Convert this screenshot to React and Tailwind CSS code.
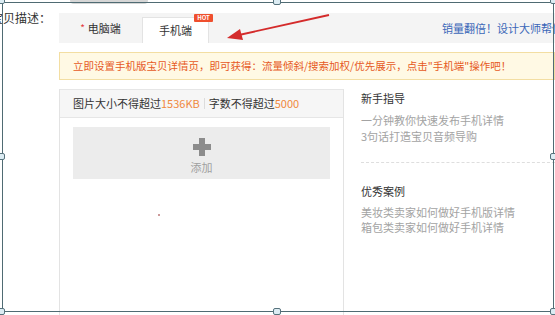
export default function App() {
  const handle = "absolute h-[7px] w-[8px] rounded-[2px] border border-[#56727c] bg-[#dcecf3]";

  return (
    <div className="relative h-[315px] w-[555px] overflow-hidden bg-white font-['Noto_Sans_CJK_SC',sans-serif] text-[11px] leading-none text-[#333]">
      <div className="flex">
        {/* label column */}
        <div className="w-[59px] shrink-0">
          <div className="ml-[-9px] mt-[12px] whitespace-nowrap text-[12px] leading-[12px] text-[#333]">宝贝描述：</div>
        </div>

        {/* main column */}
        <div className="flex min-w-0 flex-1 flex-col">
          <div className="ml-[11px] mt-[-4px] h-[8px] w-[78px] rounded-[4px] bg-[#d6d6d6]" />

          {/* tabs */}
          <div className="mt-[9px] flex h-[30px] items-end overflow-hidden bg-[#f4f4f4]">
            <div className="flex h-[30px] w-[83px] shrink-0 items-center justify-center gap-[3px]">
              <span className="text-[10px] text-[#e4393c]">*</span>
              <span>电脑端</span>
            </div>
            <div className="relative flex h-[26px] w-[67px] shrink-0 items-center justify-center border-x border-t border-[#e3e3e3] bg-white pb-[1px]">
              <span>手机端</span>
              <div className="absolute right-[-5px] top-[-4px] flex h-[8px] w-[19px] items-center justify-center rounded-[1px] bg-[#ef4f2e] text-[6px] font-bold leading-none text-white">
                HOT
              </div>
            </div>
            <div className="ml-[233px] flex h-[30px] shrink-0 items-center whitespace-nowrap text-[#3b67b8]">
              销量翻倍！设计大师帮你
            </div>
          </div>

          {/* notice */}
          <div className="mt-[9px] flex h-[28px] items-center overflow-hidden whitespace-nowrap border border-[#f3dea2] bg-[#fff9e4] pl-[13px] text-[10.5px] text-[#e65a1e]">
            立即设置手机版宝贝详情页，即可获得：流量倾斜/搜索加权/优先展示，点击"手机端"操作吧！
          </div>

          {/* editor + tips */}
          <div className="mt-[9px] flex h-[240px]">
            <div className="flex w-[285px] shrink-0 flex-col border-x border-[#e3e3e3]">
              <div className="flex h-[29px] items-center whitespace-nowrap border-y border-[#e6e6e6] bg-[#f6f6f6] pl-[13px]">
                <span>图片大小不得超过</span>
                <span className="text-[#f0893f]">1536KB</span>
                <span className="mx-[4px] h-[11px] w-px bg-[#dcdcdc]" />
                <span>字数不得超过</span>
                <span className="text-[#f0893f]">5000</span>
              </div>
              <div className="px-[13px] pt-[9px]">
                <div className="flex h-[52px] flex-col items-center justify-center bg-[#ececec]">
                  <svg width="18" height="18" viewBox="0 0 18 18" className="mt-[4px]">
                    <rect x="6" y="0" width="6" height="18" fill="#8c8c8c" />
                    <rect x="0" y="6" width="18" height="6" fill="#8c8c8c" />
                  </svg>
                  <span className="mt-[6px] text-[11px] text-[#a0a0a0]">添加</span>
                </div>
                <div className="ml-[85px] mt-[35px] h-[2px] w-[2px] bg-[#c99]" />
              </div>
            </div>

            <div className="flex min-w-0 flex-1 flex-col pl-[17px] pt-[4px]">
              <div className="text-[#333]">新手指导</div>
              <div className="mt-[11px] flex flex-col gap-[5px] whitespace-nowrap text-[#a3a3a3]">
                <span>一分钟教你快速发布手机详情</span>
                <span>3句话打造宝贝音频导购</span>
              </div>
              <div className="mt-[20px] border-t border-dashed border-[#dedede]" />
              <div className="mt-[23px] text-[#333]">优秀案例</div>
              <div className="mt-[10px] flex flex-col gap-[4px] whitespace-nowrap text-[#a3a3a3]">
                <span>美妆类卖家如何做好手机版详情</span>
                <span>箱包类卖家如何做好手机详情</span>
              </div>
            </div>
          </div>
        </div>
      </div>

      {/* arrow annotation */}
      <svg className="pointer-events-none absolute left-0 top-0" width="555" height="315">
        <line x1="329" y1="15" x2="239" y2="35" stroke="#d42b2b" strokeWidth="1.8" />
        <polygon points="227,38 243,40 240,29" fill="#d42b2b" />
      </svg>

      {/* selection frame */}
      <div className="pointer-events-none absolute left-[2px] top-[2px] h-[310px] w-[552px] border border-[#4f6b73]" />
      <div className={handle + " left-[-3px] top-[-3px]"} />
      <div className={handle + " left-[273px] top-[-2px]"} />
      <div className={handle + " left-[550px] top-[-3px]"} />
      <div className={handle + " left-[-3px] top-[153px]"} />
      <div className={handle + " left-[550px] top-[153px]"} />
      <div className={handle + " left-[-3px] top-[308px]"} />
      <div className={handle + " left-[273px] top-[308px]"} />
      <div className={handle + " left-[550px] top-[308px]"} />
    </div>
  );
}
